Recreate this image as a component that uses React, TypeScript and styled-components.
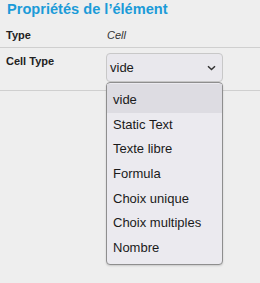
import styled, { createGlobalStyle } from 'styled-components';

const GlobalStyle = createGlobalStyle`
  html, body {
    margin: 0;
    padding: 0;
    background-color: #eeeeee;
    font-family: "Liberation Sans", Arial, sans-serif;
  }
`;

const Panel = styled.div`
  width: 260px;
  height: 283px;
  background-color: #eeeeee;
  overflow: hidden;
`;

const Title = styled.div`
  color: #1b9bd8;
  font-size: 14.6px;
  font-weight: bold;
  line-height: 19px;
  padding-left: 7px;
`;

const Row = styled.div<{ $tall?: boolean }>`
  display: grid;
  grid-template-columns: 100px 1fr;
  align-items: start;
  padding: ${p => (p.$tall ? '5px 0 8px 6px' : '9px 0 5px 6px')};
  border-bottom: 1px solid #cfcfcf;
`;

const Label = styled.div<{ $offset?: number }>`
  font-size: 11px;
  font-weight: bold;
  line-height: 14px;
  color: #222;
  margin-top: ${p => p.$offset ?? 0}px;
`;

const Value = styled.div`
  font-size: 11px;
  font-style: italic;
  line-height: 14px;
  color: #333;
  padding-left: 1px;
`;

const SelectWrap = styled.div`
  position: relative;
  width: 117px;
`;

const SelectBox = styled.div`
  box-sizing: border-box;
  display: flex;
  align-items: center;
  justify-content: space-between;
  height: 29px;
  padding: 0 6px 0 3px;
  border: 1px solid #c8c8c8;
  border-radius: 4px;
  background-color: #e9e8ed;
  font-size: 13px;
  color: #1a1a1a;
`;

const Menu = styled.ul`
  position: absolute;
  top: 100%;
  left: 0;
  box-sizing: border-box;
  width: 117px;
  margin: 0;
  padding: 1px 0 3px;
  list-style: none;
  border: 1px solid #8e8e8e;
  border-radius: 4px;
  background-color: #ebeaef;
  box-shadow: 0 1px 2px rgba(0, 0, 0, 0.15);
`;

const Option = styled.li<{ $active?: boolean }>`
  height: 24.7px;
  line-height: 24.7px;
  padding-left: 6px;
  font-size: 13px;
  color: #1a1a1a;
  white-space: nowrap;
  background-color: ${p => (p.$active ? '#dddce2' : 'transparent')};

  &:first-child {
    padding-top: 4px;
  }
`;

const options = ['vide', 'Static Text', 'Texte libre', 'Formula', 'Choix unique', 'Choix multiples', 'Nombre'];

function Chevron() {
  return (
    <svg width="9" height="6" viewBox="0 0 9 6">
      <path d="M1 1.2 L4.5 4.5 L8 1.2" fill="none" stroke="#333" strokeWidth="1.5" />
    </svg>
  );
}

export default function App() {
  return (
    <Panel>
      <GlobalStyle />
      <Title>Propriétés de l’élément</Title>
      <Row>
        <Label>Type</Label>
        <Value>Cell</Value>
      </Row>
      <Row $tall>
        <Label $offset={1}>Cell Type</Label>
        <SelectWrap>
          <SelectBox>
            <span>vide</span>
            <Chevron />
          </SelectBox>
          <Menu>
            {options.map((o, i) => (
              <Option key={o} $active={i === 0}>{o}</Option>
            ))}
          </Menu>
        </SelectWrap>
      </Row>
    </Panel>
  );
}
